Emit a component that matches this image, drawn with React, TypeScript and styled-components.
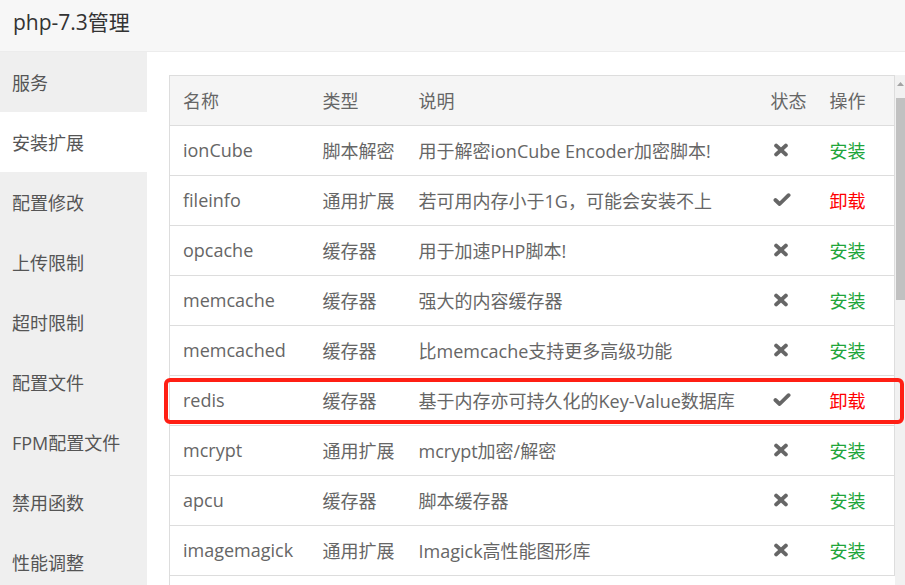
import styled, { createGlobalStyle } from "styled-components";

const GlobalStyle = createGlobalStyle`
  html, body {
    margin: 0;
    padding: 0;
    background: #fff;
  }
  body {
    font-family: "Open Sans", "Noto Sans CJK SC", sans-serif;
  }
`;

const Page = styled.div`
  width: 905px;
  height: 585px;
  overflow: hidden;
  display: flex;
  flex-direction: column;
`;

const Header = styled.div`
  height: 52px;
  flex-shrink: 0;
  box-sizing: border-box;
  padding-left: 13px;
  line-height: 44px;
  background: #f7f7f7;
  border-bottom: 1px solid #ececec;
  font-size: 21px;
  color: #333;
`;

const Body = styled.div`
  flex: 1;
  display: flex;
  min-height: 0;
`;

const Sidebar = styled.ul`
  width: 147px;
  flex-shrink: 0;
  margin: 0;
  padding: 0;
  list-style: none;
  background: #efefef;
`;

const NavItem = styled.li<{ $active?: boolean }>`
  height: 60px;
  box-sizing: border-box;
  display: flex;
  align-items: center;
  padding: 0 0 1px 12px;
  font-size: 18px;
  color: #555;
  background: ${(p) => (p.$active ? "#fff" : "transparent")};
`;

const Content = styled.div`
  flex: 1;
  display: flex;
  padding: 23px 0 0 22px;
  min-width: 0;
`;

const TableWrap = styled.div`
  width: 725px;
  flex-shrink: 0;
  border-left: 1px solid #ddd;
  box-sizing: border-box;
`;

const Table = styled.table`
  width: 725px;
  margin-left: -1px;
  table-layout: fixed;
  border-collapse: collapse;
  border: 1px solid #ddd;
  font-size: 18px;
  color: #666;
`;

const HeadCell = styled.th`
  height: 47px;
  padding: 0 0 2px 13px;
  text-align: left;
  font-weight: normal;
  background: #f5f5f5;
  white-space: nowrap;
`;

const Row = styled.tr`
  border-top: 1px solid #ddd;
`;

const Cell = styled.td`
  height: 47px;
  padding: 0 0 2px 13px;
  white-space: nowrap;
  position: relative;
`;

const StatusCell = styled(Cell)`
  padding-left: 15px;
  svg {
    display: block;
  }
`;

const Action = styled.span<{ $remove?: boolean }>`
  color: ${(p) => (p.$remove ? "#ff0000" : "#20a53a")};
  cursor: pointer;
`;

const Highlight = styled.div`
  position: absolute;
  top: 2px;
  left: -6px;
  width: 740px;
  height: 46px;
  box-sizing: border-box;
  border: 4px solid #ff1f14;
  border-radius: 6px;
  pointer-events: none;
`;

const ScrollTrack = styled.div`
  width: 10px;
  margin-left: 1px;
  background: #f1f1f1;
  display: flex;
  flex-direction: column;
  align-items: flex-end;
`;

const ScrollArrow = styled.div`
  height: 17px;
  width: 10px;
  display: flex;
  align-items: center;
  justify-content: center;
`;

const ScrollThumb = styled.div`
  margin-top: 6px;
  width: 9px;
  height: 202px;
  background: #c1c1c1;
`;

const CrossIcon = () => (
  <svg width="16" height="14" viewBox="0 0 16 14">
    <path d="M3.2 2.6 L12.8 11.4 M12.8 2.6 L3.2 11.4" stroke="#666" strokeWidth="4" strokeLinecap="round" fill="none" />
  </svg>
);

const CheckIcon = () => (
  <svg width="18" height="15" viewBox="0 0 18 15">
    <polyline points="2.4,8 6.6,12 15.6,3.2" stroke="#666" strokeWidth="3.8" strokeLinecap="round" strokeLinejoin="round" fill="none" />
  </svg>
);

type Ext = {
  name: string;
  type: string;
  desc: string;
  installed: boolean;
  highlight?: boolean;
};

const exts: Ext[] = [
  { name: "ionCube", type: "脚本解密", desc: "用于解密ionCube Encoder加密脚本!", installed: false },
  { name: "fileinfo", type: "通用扩展", desc: "若可用内存小于1G，可能会安装不上", installed: true },
  { name: "opcache", type: "缓存器", desc: "用于加速PHP脚本!", installed: false },
  { name: "memcache", type: "缓存器", desc: "强大的内容缓存器", installed: false },
  { name: "memcached", type: "缓存器", desc: "比memcache支持更多高级功能", installed: false },
  { name: "redis", type: "缓存器", desc: "基于内存亦可持久化的Key-Value数据库", installed: true, highlight: true },
  { name: "mcrypt", type: "通用扩展", desc: "mcrypt加密/解密", installed: false },
  { name: "apcu", type: "缓存器", desc: "脚本缓存器", installed: false },
  { name: "imagemagick", type: "通用扩展", desc: "Imagick高性能图形库", installed: false },
];

const menu = ["服务", "安装扩展", "配置修改", "上传限制", "超时限制", "配置文件", "FPM配置文件", "禁用函数", "性能调整"];

const App = () => {
  return (
    <Page>
      <GlobalStyle />
      <Header>php-7.3管理</Header>
      <Body>
        <Sidebar>
          {menu.map((m) => (
            <NavItem key={m} $active={m === "安装扩展"}>
              {m}
            </NavItem>
          ))}
        </Sidebar>
        <Content>
          <TableWrap>
            <Table>
              <colgroup>
                <col style={{ width: 140 }} />
                <col style={{ width: 96 }} />
                <col style={{ width: 352 }} />
                <col style={{ width: 59 }} />
                <col style={{ width: 78 }} />
              </colgroup>
              <thead>
                <tr>
                  <HeadCell>名称</HeadCell>
                  <HeadCell>类型</HeadCell>
                  <HeadCell>说明</HeadCell>
                  <HeadCell>状态</HeadCell>
                  <HeadCell>操作</HeadCell>
                </tr>
              </thead>
              <tbody>
                {exts.map((e) => (
                  <Row key={e.name}>
                    <Cell>
                      {e.highlight && <Highlight />}
                      {e.name}
                    </Cell>
                    <Cell>{e.type}</Cell>
                    <Cell>{e.desc}</Cell>
                    <StatusCell>{e.installed ? <CheckIcon /> : <CrossIcon />}</StatusCell>
                    <Cell>
                      <Action $remove={e.installed}>{e.installed ? "卸载" : "安装"}</Action>
                    </Cell>
                  </Row>
                ))}
              </tbody>
            </Table>
          </TableWrap>
          <ScrollTrack>
            <ScrollArrow>
              <svg width="7" height="4" viewBox="0 0 7 4">
                <polygon points="0,4 3.5,0 7,4" fill="#a3a3a3" />
              </svg>
            </ScrollArrow>
            <ScrollThumb />
          </ScrollTrack>
        </Content>
      </Body>
    </Page>
  );
};

export default App;
